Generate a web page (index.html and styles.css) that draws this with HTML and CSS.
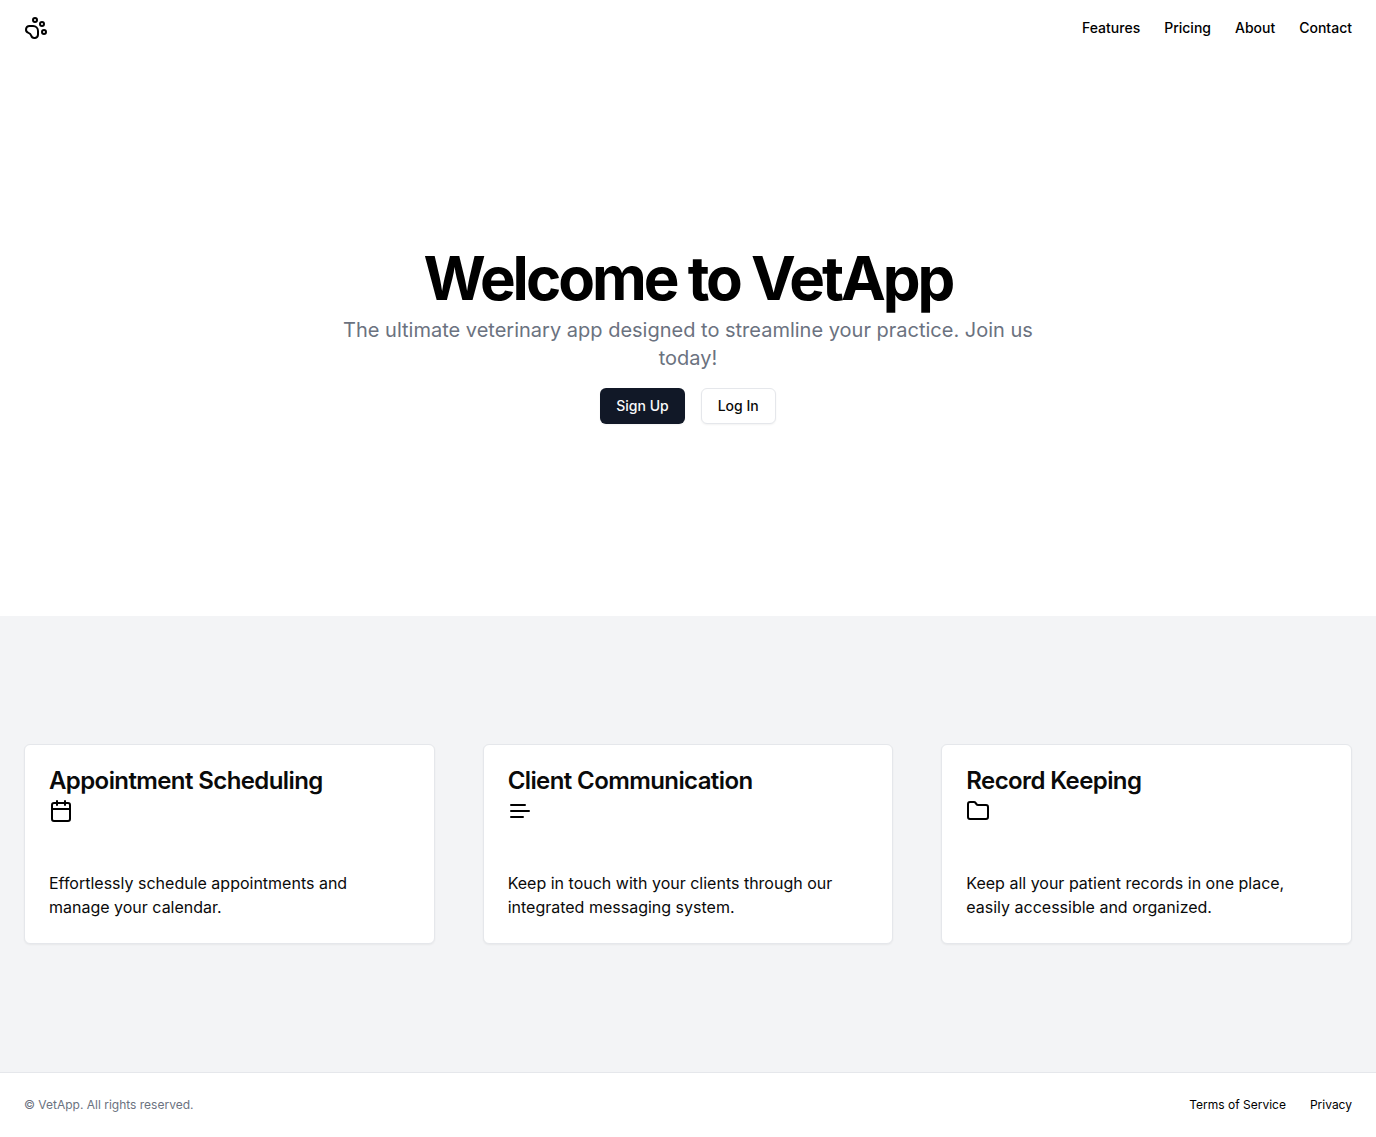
FILE: index.html
```html
<!DOCTYPE html>
<html lang="en">
<head>
  <meta charset="utf-8">
  <meta name="viewport" content="width=device-width, initial-scale=1">
  <title>VetApp</title>
  <link rel="stylesheet" href="styles.css">
</head>
<body>
  <header class="site-header">
    <a class="brand" href="#" aria-label="VetApp home">
      <svg class="icon" viewBox="0 0 24 24" aria-hidden="true">
        <circle cx="11" cy="4" r="2"/>
        <circle cx="18" cy="8" r="2"/>
        <circle cx="20" cy="16" r="2"/>
        <path d="M9 10a5 5 0 0 1 5 5v3.500a3.500 3.500 0 0 1-6.840 1.045Q6.520 17.480 4.460 16.840A3.500 3.500 0 0 1 5.500 10Z"/>
      </svg>
    </a>
    <nav class="site-nav" aria-label="Main">
      <a href="#features">Features</a>
      <a href="#">Pricing</a>
      <a href="#">About</a>
      <a href="#">Contact</a>
    </nav>
  </header>
  <main>
    <section class="hero">
      <h1 class="hero-title">Welcome to VetApp</h1>
      <p class="hero-text">The ultimate veterinary app designed to streamline your practice. Join us today!</p>
      <div class="hero-actions">
        <button class="button button-primary" type="button">Sign Up</button>
        <button class="button button-outline" type="button">Log In</button>
      </div>
    </section>
    <section class="features" id="features">
      <article class="card">
        <div class="card-header">
          <h2 class="card-title">Appointment Scheduling</h2>
          <svg class="icon" viewBox="0 0 24 24" aria-hidden="true">
            <rect width="18" height="18" x="3" y="4" rx="2"/>
            <path d="M16 2v4M8 2v4M3 10h18"/>
          </svg>
        </div>
        <p class="card-text">Effortlessly schedule appointments and manage your calendar.</p>
      </article>
      <article class="card">
        <div class="card-header">
          <h2 class="card-title">Client Communication</h2>
          <svg class="icon" viewBox="0 0 24 24" aria-hidden="true">
            <path d="M17 6H3M21 12H3M15 18H3"/>
          </svg>
        </div>
        <p class="card-text">Keep in touch with your clients through our integrated messaging system.</p>
      </article>
      <article class="card">
        <div class="card-header">
          <h2 class="card-title">Record Keeping</h2>
          <svg class="icon" viewBox="0 0 24 24" aria-hidden="true">
            <path d="M4 20h16a2 2 0 0 0 2-2V8a2 2 0 0 0-2-2h-7.930a2 2 0 0 1-1.660-.9l-.82-1.200A2 2 0 0 0 7.930 3H4a2 2 0 0 0-2 2v13c0 1.100.9 2 2 2Z"/>
          </svg>
        </div>
        <p class="card-text">Keep all your patient records in one place, easily accessible and organized.</p>
      </article>
    </section>
  </main>
  <footer class="site-footer">
    <p class="copyright">© VetApp. All rights reserved.</p>
    <nav class="footer-nav" aria-label="Legal">
      <a href="#">Terms of Service</a>
      <a href="#">Privacy</a>
    </nav>
  </footer>
</body>
</html>
```

FILE: styles.css
```css
*,
*::before,
*::after {
  box-sizing: border-box;
}

body,
h1,
h2,
p {
  margin: 0;
}

body {
  font-family: Inter, "Liberation Sans", sans-serif;
  font-size: 16px;
  line-height: 24px;
  color: #0a0a0a;
  background: #fff;
}

a {
  color: #000;
  text-decoration: none;
}

a:hover {
  text-decoration: underline;
}

.icon {
  display: block;
  width: 24px;
  height: 24px;
  fill: none;
  stroke: #000;
  stroke-width: 2;
  stroke-linecap: round;
  stroke-linejoin: round;
}

.site-header {
  display: flex;
  align-items: center;
  justify-content: space-between;
  height: 56px;
  padding: 0 24px;
}

.site-nav,
.footer-nav {
  display: flex;
  gap: 24px;
}

.site-nav {
  font-size: 14px;
  font-weight: 500;
}

.hero {
  display: flex;
  flex-direction: column;
  align-items: center;
  padding: 192px 24px;
  text-align: center;
}

.hero-title {
  font-size: 60px;
  font-weight: 700;
  line-height: 60px;
  letter-spacing: -0.05em;
  color: #000;
}

.hero-text {
  max-width: 700px;
  margin-top: 8px;
  font-size: 20px;
  line-height: 28px;
  color: #6b7280;
}

.hero-actions {
  display: flex;
  gap: 16px;
  margin-top: 16px;
}

.button {
  height: 36px;
  padding: 0 16px;
  border: 0;
  border-radius: 6px;
  font: 500 14px/20px Inter, "Liberation Sans", sans-serif;
  box-shadow: 0 1px 2px rgb(0 0 0 / 5%);
  cursor: pointer;
}

.button-primary {
  color: #f9fafb;
  background: #111827;
}

.button-outline {
  border: 1px solid #e5e7eb;
  color: #0a0a0a;
  background: #fff;
}

.features {
  display: grid;
  grid-template-columns: repeat(3, 1fr);
  gap: 48px;
  padding: 128px 24px;
  background: #f3f4f6;
}

.card {
  border: 1px solid #e5e7eb;
  border-radius: 6px;
  background: #fff;
  box-shadow: 0 1px 2px rgb(0 0 0 / 5%);
}

.card-header {
  display: grid;
  gap: 6px;
  padding: 24px;
}

.card-title {
  font-size: 24px;
  font-weight: 600;
  line-height: 24px;
  letter-spacing: -0.025em;
}

.card-text {
  padding: 24px;
}

.site-footer {
  display: flex;
  align-items: center;
  justify-content: space-between;
  padding: 24px;
  border-top: 1px solid #e5e7eb;
  font-size: 12px;
  line-height: 16px;
}

.copyright {
  color: #6b7280;
}

@media (max-width: 800px) {
  .features {
    grid-template-columns: 1fr;
  }
}
```
